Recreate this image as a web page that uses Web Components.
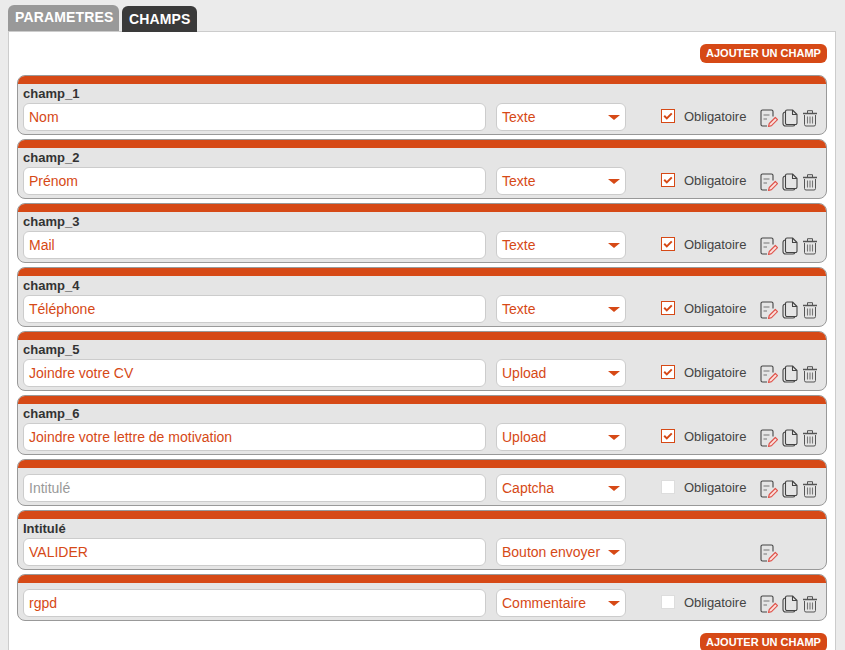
<!DOCTYPE html>
<html lang="fr">
<head>
<meta charset="utf-8">
<title>Champs</title>
<style>
    html, body { height: 100%; overflow: hidden; }
    body {
        margin: 0;
        padding: 5px 9px 0 8px;
        box-sizing: border-box;
        background: #ebebeb;
        font-family: "Liberation Sans", Arial, sans-serif;
        color: #333;
    }
</style>
</head>
<body>
<form-tabs></form-tabs>
<form-panel>
    <add-button></add-button>
    <field-row type="Texte" required><span slot="label">champ_1</span>Nom</field-row>
    <field-row type="Texte" required><span slot="label">champ_2</span>Prénom</field-row>
    <field-row type="Texte" required><span slot="label">champ_3</span>Mail</field-row>
    <field-row type="Texte" required><span slot="label">champ_4</span>Téléphone</field-row>
    <field-row type="Upload" required><span slot="label">champ_5</span>Joindre votre CV</field-row>
    <field-row type="Upload" required><span slot="label">champ_6</span>Joindre votre lettre de motivation</field-row>
    <field-row type="Captcha" empty placeholder>Intitulé</field-row>
    <field-row type="Bouton envoyer" submit><span slot="label">Intitulé</span>VALIDER</field-row>
    <field-row type="Commentaire" empty>rgpd</field-row>
    <add-button class="bottom"></add-button>
</form-panel>

<script>
// TABS
class FormTabs extends HTMLElement {
    constructor() {
        super();
        this.attachShadow({ mode: "open" });

        this.shadowRoot.innerHTML = `
            <style>
                :host {
                    display: flex;
                    align-items: flex-end;
                    gap: 3px;
                    height: 26px;
                }
                div {
                    box-sizing: border-box;
                    color: #fff;
                    font-weight: bold;
                    font-size: 14px;
                    border-radius: 6px 6px 0 0;
                }
                .off {
                    width: 111px;
                    height: 26px;
                    line-height: 25px;
                    padding-left: 7px;
                    background: #999;
                    letter-spacing: .15px;
                }
                .on {
                    width: 75px;
                    height: 26px;
                    margin-bottom: -1px;
                    line-height: 27px;
                    padding-left: 7px;
                    background-color: #3a3a3a;
                    background-image: radial-gradient(#555 .6px, transparent .7px);
                    background-size: 4px 4px;
                    position: relative;
                    letter-spacing: .15px;
                }
            </style>
            <div class="off">PARAMETRES</div>
            <div class="on">CHAMPS</div>
        `;
    }
}
customElements.define("form-tabs", FormTabs);


// PANEL
class FormPanel extends HTMLElement {
    constructor() {
        super();
        this.attachShadow({ mode: "open" });

        this.shadowRoot.innerHTML = `
            <style>
                :host {
                    display: flex;
                    flex-direction: column;
                    gap: 4px;
                    height: 640px;
                    box-sizing: border-box;
                    padding: 12px 8px 0;
                    background: #fff;
                    border: 1px solid #ccc;
                }
            </style>
            <slot></slot>
        `;
    }
}
customElements.define("form-panel", FormPanel);


// BUTTON
class AddButton extends HTMLElement {
    constructor() {
        super();
        this.attachShadow({ mode: "open" });

        this.shadowRoot.innerHTML = `
            <style>
                :host {
                    display: block;
                    align-self: flex-end;
                    width: 127px;
                    height: 19px;
                    margin-bottom: 8px;
                    background: #d64916;
                    color: #fff;
                    border-radius: 6px;
                    font-size: 11px;
                    font-weight: bold;
                    line-height: 19px;
                    text-align: center;
                    flex: none;
                }
                :host(.bottom) {
                    margin: 8px 0 0;
                }
            </style>
            AJOUTER UN CHAMP
        `;
    }
}
customElements.define("add-button", AddButton);


// ROW
const editIcon = `
    <svg width="18" height="18" viewBox="0 0 18 18" fill="none">
        <path d="M13 7.500V2.500A1.500 1.500 0 0 0 11.500 1h-9A1.500 1.500 0 0 0 1 2.500v13A1.500 1.500 0 0 0 2.500 17H7" stroke="#444" stroke-width="1.100"/>
        <path d="M3.500 6h6M3.500 10h3.500" stroke="#777" stroke-width="1.200"/>
        <path d="M8.500 17.500l.8-3 6-6 2.200 2.200-6 6z" fill="#fbe3df" stroke="#e0574f" stroke-width="1.200" stroke-linejoin="round"/>
    </svg>`;
const copyIcon = `
    <svg width="16" height="18" viewBox="0 0 16 18" fill="none" stroke="#444" stroke-width="1.100" stroke-linejoin="round">
        <path d="M3.500 2.500A1.500 1.500 0 0 1 5 1h5.500L15 5.500V14a1.500 1.500 0 0 1-1.500 1.500H5A1.500 1.500 0 0 1 3.500 14z"/>
        <path d="M10.500 1v4.500H15"/>
        <path d="M3.500 3A2.500 2.500 0 0 0 1 5.500V14.500A2.500 2.500 0 0 0 3.500 17H10.500a2.500 2.500 0 0 0 2.500-1.500"/>
    </svg>`;
const trashIcon = `
    <svg width="16" height="18" viewBox="0 0 16 18" fill="none" stroke="#555" stroke-width="1">
        <path d="M1 4.500h14" stroke-width="1.500"/>
        <path d="M5.500 4V1.700h5V4"/>
        <path d="M2.500 6v9.500A1.500 1.500 0 0 0 4 17h8a1.500 1.500 0 0 0 1.500-1.500V6"/>
        <path d="M5.500 7.500v7M8 7.500v7M10.500 7.500v7" stroke="#777" stroke-width="1.100"/>
    </svg>`;

class FieldRow extends HTMLElement {
    connectedCallback() {
        if (this.shadowRoot) return;
        this.attachShadow({ mode: "open" });

        const type = this.getAttribute("type");
        const submit = this.hasAttribute("submit");
        const empty = this.hasAttribute("empty");
        const hasLabel = !!this.querySelector("[slot=label]");

        let check = "";
        if (!submit) {
            check = `
                <label>
                    <i class="${empty ? "box" : "box on"}">
                        ${empty ? "" : `<svg width="12" height="12" viewBox="0 0 12 12"><path d="M2.200 5.800l2.600 2.600 5-5" fill="none" stroke="#d64916" stroke-width="2"/></svg>`}
                    </i>
                    Obligatoire
                </label>`;
        }

        this.shadowRoot.innerHTML = `
            <style>
                :host {
                    display: block;
                    flex: none;
                    background: #e5e5e5;
                    border: 1px solid #999;
                    border-radius: 8px;
                    overflow: hidden;
                    box-sizing: border-box;
                }
                .bar { height: 8px; background: #d64916; }
                .title {
                    height: 19px;
                    padding-left: 5px;
                    font-size: 13px;
                    font-weight: bold;
                    line-height: 19px;
                    color: #333;
                }
                .title.none { height: 6px; }
                .controls {
                    display: grid;
                    grid-template-columns: 463px 130px 114px auto;
                    gap: 10px;
                    align-items: center;
                    padding: 0 5px 3px;
                }
                .input, .select {
                    box-sizing: border-box;
                    height: 28px;
                    background: #fff;
                    border: 1px solid #ccc;
                    border-radius: 6px;
                    padding-left: 5px;
                    font-size: 14px;
                    line-height: 26px;
                    color: #d64916;
                    white-space: nowrap;
                }
                .input.ph { color: #999; }
                .select { position: relative; }
                .select::after {
                    content: "";
                    position: absolute;
                    right: 5px;
                    top: 11px;
                    border-style: solid;
                    border-width: 5px 6px 0;
                    border-color: #d64916 transparent transparent;
                    width: 0;
                }
                label {
                    display: flex;
                    align-items: center;
                    padding-left: 25px;
                    margin-top: -2px;
                    font-size: 13px;
                    letter-spacing: -.05px;
                    color: #444;
                    height: 16px;
                    white-space: nowrap;
                }
                .box {
                    display: flex;
                    align-items: center;
                    justify-content: center;
                    box-sizing: border-box;
                    width: 14px;
                    height: 14px;
                    margin-right: 9px;
                    background: #fff;
                    border: 1px solid #ddd;
                }
                .box.on { border-color: #d64916; }
                .icons {
                    display: flex;
                    gap: 4px;
                    height: 18px;
                    padding-top: 2px;
                }
                svg { display: block; flex: none; }
            </style>
            <div class="bar"></div>
            <div class="title ${hasLabel ? "" : "none"}"><slot name="label"></slot></div>
            <div class="controls">
                <div class="input ${this.hasAttribute("placeholder") ? "ph" : ""}"><slot></slot></div>
                <div class="select">${type}</div>
                <div>${check}</div>
                <div class="icons">${editIcon}${submit ? "" : copyIcon + trashIcon}</div>
            </div>
        `;
    }
}
customElements.define("field-row", FieldRow);
</script>
</body>
</html>
